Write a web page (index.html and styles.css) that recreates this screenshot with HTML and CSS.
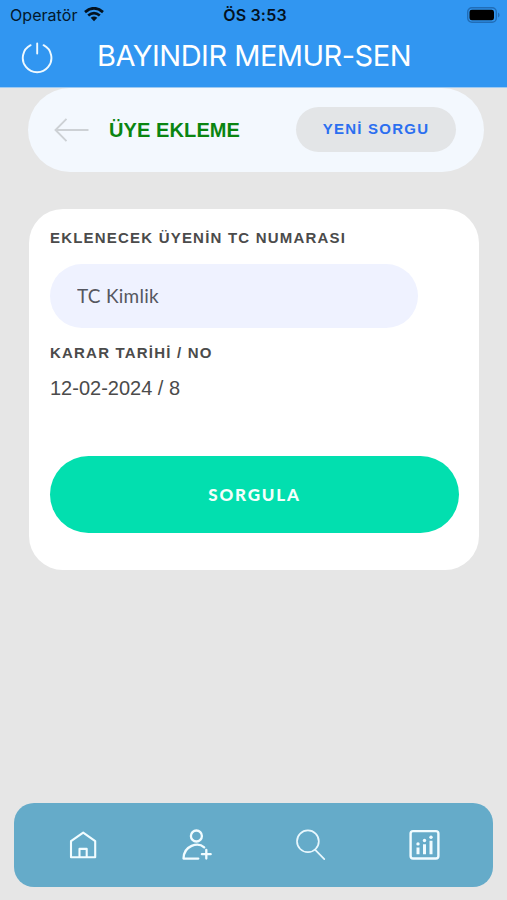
FILE: index.html
```html
<!DOCTYPE html>
<html lang="tr">
<head>
<meta charset="utf-8">
<title>Üye Ekleme</title>
<link rel="stylesheet" href="styles.css">
</head>
<body>
<div class="app">
  <header class="header">
    <div class="status">
      <div class="carrier"><span>Operatör</span>
        <svg class="wifi" width="20" height="15" viewBox="0 0 20 15" fill="none" stroke="#03121f" stroke-width="2.7"><path d="M1 5.1Q10-2.6 19 5.1M4.2 8.6Q10 3.6 15.8 8.6"/><path d="M6.7 10.8Q10 8 13.3 10.8L10 14.2Z" fill="#03121f" stroke="none"/></svg>
      </div>
      <span class="time">ÖS 3:53</span>
      <svg class="battery" width="33" height="16" viewBox="0 0 33 16"><rect x=".7" y=".7" width="28.6" height="14.6" rx="4.2" fill="none" stroke="#216db7" stroke-width="1.4"/><rect x="2.5" y="2.7" width="24.5" height="10.6" rx="2.4" fill="#000"/><path d="M31 5.6q1.6.7 1.6 2.4T31 10.4Z" fill="#216db7"/></svg>
    </div>
    <div class="titlebar">
      <svg class="power" width="32" height="32" viewBox="0 0 32 32" fill="none" stroke="#eef9ff" stroke-width="1.9" stroke-linecap="round"><path d="M9.6 3.2A14.3 14.3 0 1 0 22.6 3.2M16.2 1.5V11.5"/></svg>
      <h1 class="title">BAYINDIR MEMUR-SEN</h1>
    </div>
  </header>
  <main class="content">
    <section class="banner">
      <svg class="back" width="36" height="26" viewBox="0 0 36 26" fill="none" stroke="#cdd1d5" stroke-width="1.9"><path d="M12.5 1.8L1.5 13L12.5 24.2M1.5 13H34.5"/></svg>
      <h2 class="heading">ÜYE EKLEME</h2>
      <button class="new-query">YENİ SORGU</button>
    </section>
    <section class="card">
      <label class="label" for="tc">EKLENECEK ÜYENİN TC NUMARASI</label>
      <input class="field" id="tc" placeholder="TC Kimlik">
      <div class="label label-date">KARAR TARİHİ / NO</div>
      <div class="date">12-02-2024 / 8</div>
      <button class="submit">SORGULA</button>
    </section>
  </main>
  <nav class="nav">
    <svg width="34" height="34" viewBox="0 0 34 34" fill="none" stroke="#f1fcff" stroke-width="2.1" stroke-linejoin="round"><path d="M6 13.2L18.2 4.6L30.2 13.2V29.2H6ZM14.5 29V20.9H21.7V29"/></svg>
    <svg width="34" height="34" viewBox="0 0 34 34" fill="none" stroke="#f1fcff" stroke-width="2.3" stroke-linecap="round" stroke-linejoin="round"><circle cx="17.4" cy="8" r="5.5"/><path d="M25.2 19.4C18.9 13.7 4.8 17.4 4.5 30.6H19.3M27.3 21.8V30.5M22.9 26.2H31.7"/></svg>
    <svg width="34" height="34" viewBox="0 0 34 34" fill="none" stroke="#e8f7fd" stroke-width="1.7" stroke-linecap="round"><circle cx="13.9" cy="13.3" r="10.9"/><path d="M21 21.7L30.3 31.2"/></svg>
    <svg width="34" height="34" viewBox="0 0 34 34" fill="none" stroke="#f1fcff" stroke-width="2.4"><rect x="2.6" y="3.1" width="27.8" height="27.4" rx="2.5"/><path d="M10 19.6V26.2M16.5 16.2V26.2M23 12.8V26.2" stroke-width="3"/><g fill="#f1fcff" stroke="none"><circle cx="10" cy="15.9" r="1.7"/><circle cx="16.5" cy="12.5" r="1.7"/><circle cx="23" cy="9.2" r="1.7"/></g></svg>
  </nav>
</div>
</body>
</html>
```

FILE: styles.css
```css
* { box-sizing: border-box; }
body { margin: 0; background: #e6e6e6; font-family: "Liberation Sans", Arial, sans-serif; }
.app { height: 900px; display: flex; flex-direction: column; overflow: hidden; }
.header { height: 88px; background: #3196f1; border-bottom: 1px solid #9ecaf2; flex: none; }
.status { height: 30px; padding: 0 7px 0 10px; display: grid; grid-template-columns: 1fr auto 1fr; align-items: center; font: 16px/30px Inter, sans-serif; color: #03182b; }
.carrier { display: flex; align-items: center; gap: 7px; letter-spacing: .05px; }
.wifi { margin-top: -1px; }
.time { font-weight: 600; letter-spacing: .2px; color: #03121f; }
.battery { justify-self: end; margin-top: -1px; }
.titlebar { height: 56px; display: flex; align-items: center; padding-left: 21px; }
.power { flex: none; }
.title { margin: -4px 0 0 44px; font: 400 29px/36px Inter, sans-serif; letter-spacing: -.5px; color: #fff; white-space: nowrap; }
.content { flex: 1; padding: 0 23px 0 28px; }
.banner { height: 84px; border-radius: 42px; background: #f3f8fe; display: flex; align-items: center; padding: 0 28px 1px 26px; }
.back { margin-right: 19px; flex: none; }
.heading { margin: 0; font-size: 20px; line-height: 24px; letter-spacing: .1px; color: #0a8511; white-space: nowrap; flex: 1; }
.new-query { width: 160px; height: 45px; border: 0; border-radius: 23px; background: #e3e5e7; color: #2b6ff0; font: 700 15px "Liberation Sans", Arial, sans-serif; letter-spacing: 1.25px; padding: 0 0 3px; white-space: nowrap; }
.card { height: 361px; margin: 37px 5px 0 1px; padding: 20px 20px 0 21px; background: #fff; border-radius: 34px; }
.label { display: block; font-size: 15px; line-height: 18px; font-weight: 700; letter-spacing: 1.2px; color: #4b4b4b; white-space: nowrap; }
.field { display: block; width: 368px; height: 64px; margin-top: 17px; padding: 0 27px 1px; border: 0; border-radius: 32px; background: #eff2ff; font: 19px Lato, sans-serif; letter-spacing: .25px; }
.field::placeholder { color: #555760; opacity: 1; }
.label-date { margin-top: 16px; }
.date { margin-top: 14px; font-size: 20px; line-height: 24px; color: #4b4b4b; white-space: nowrap; }
.submit { display: block; width: 100%; height: 77px; margin-top: 56px; padding: 0 0 1px; border: 0; border-radius: 39px; background: #02dfaf; color: #f4fffc; font: 900 17px Lato, sans-serif; letter-spacing: 1.8px; }
.nav { flex: none; height: 84px; margin: 0 14px 13px; padding: 0 51px; border-radius: 20px; background: #65abc9; display: flex; align-items: center; justify-content: space-between; }
```
